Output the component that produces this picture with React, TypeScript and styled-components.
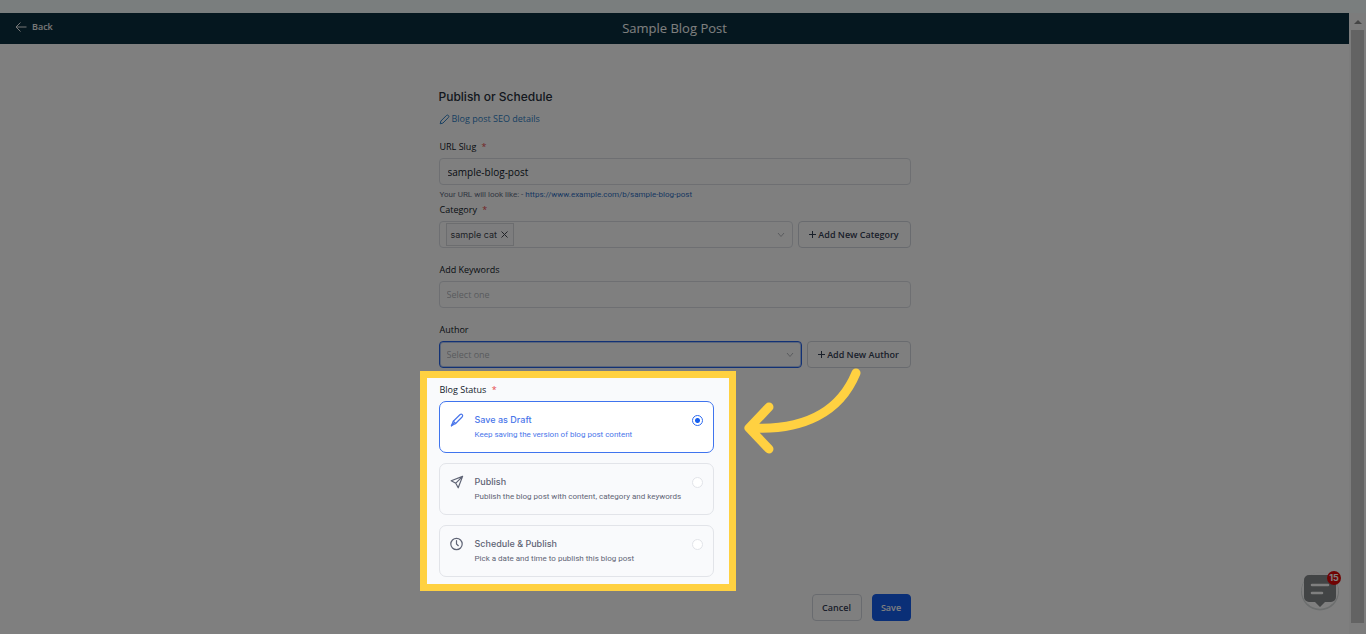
import React, { useState } from 'react';
import styled, { createGlobalStyle, css } from 'styled-components';

const sans = "'Open Sans', 'Noto Sans', sans-serif";
const inter = "Inter, 'Liberation Sans', sans-serif";
const small = "Roboto, 'Open Sans', sans-serif";

const GlobalStyle = createGlobalStyle`
  * { box-sizing: border-box; }
  body { margin: 0; background: #ffffff; font-family: ${sans}; }
  button, input, select { font-family: inherit; margin: 0; }
`;

const Page = styled.div`
  position: relative;
  overflow: hidden;
  min-height: 100vh;
  display: flex;
  flex-direction: column;
`;

const TopStrip = styled.div`
  height: 13px;
  background: #f4fcfc;
`;

const Body = styled.div`
  flex: 1;
  display: flex;
`;

const Content = styled.div`
  flex: 1;
  min-width: 0;
`;

const Header = styled.header`
  display: grid;
  grid-template-columns: 1fr auto 1fr;
  align-items: center;
  height: 31px;
  padding: 0 15px;
  background: #0b2f3e;
  color: #ffffff;
`;

const BackLink = styled.a`
  display: flex;
  align-items: center;
  gap: 5px;
  padding-bottom: 4px;
  color: #f0f0f0;
  font-size: 9px;
  font-weight: 600;
  line-height: 12px;
  text-decoration: none;
`;

const PageTitle = styled.h1`
  margin: 0;
  padding-bottom: 2px;
  font-size: 13px;
  font-weight: 400;
  line-height: 16px;
`;

const Form = styled.form`
  display: flex;
  flex-direction: column;
  width: 100%;
  max-width: 472px;
  margin: 0 auto;
  padding: 45px 0 12px;
`;

const FormTitle = styled.h2`
  margin: 0 0 7px;
  font-family: ${inter};
  font-size: 12px;
  font-weight: 500;
  line-height: 16px;
  color: #28303c;
`;

const SeoLink = styled.a`
  display: flex;
  align-items: center;
  gap: 2px;
  margin-bottom: 14px;
  font-size: 9px;
  line-height: 14px;
  color: #2f7fc4;
  text-decoration: none;
`;

const Field = styled.div<{ $gap?: number }>`
  display: flex;
  flex-direction: column;
  margin-bottom: ${(p) => p.$gap ?? 15}px;
`;

const labelText = css`
  margin: 0 0 4px;
  padding: 0 1px;
  font-size: 9px;
  font-weight: 400;
  line-height: 14px;
  color: #101828;
`;

const Label = styled.label`
  ${labelText}
`;

const Required = styled.span`
  margin-left: 3px;
  color: #e5484d;
`;

const box = css`
  height: 27px;
  border: 1px solid #dcdfe5;
  border-radius: 4px;
  background: #ffffff;
`;

const TextInput = styled.input<{ $roomy?: boolean }>`
  ${box}
  width: 100%;
  padding: 0 ${(p) => (p.$roomy ? 8 : 7)}px;
  font-size: ${(p) => (p.$roomy ? 10 : 9)}px;
  color: #101828;
  outline: none;
  &::placeholder { color: #b4b7bd; opacity: 1; }
`;

const Hint = styled.p`
  margin: 4px 0 0;
  padding: 0 1px;
  font-family: ${small};
  font-size: 8px;
  line-height: 12px;
  color: #667085;
  a { color: #2f6fc4; text-decoration: none; }
`;

const Row = styled.div`
  display: flex;
  gap: 5px;
`;

const TagBox = styled.div`
  ${box}
  flex: 1;
  min-width: 0;
  display: flex;
  align-items: center;
  padding: 0 7px 0 6px;
`;

const Tag = styled.span`
  display: flex;
  align-items: center;
  gap: 4px;
  height: 23px;
  padding: 0 5px 0 4px;
  border: 1px solid #d9dade;
  background: #fafafc;
  font-family: ${inter};
  font-size: 9px;
  color: #40454f;
`;

const TagRemove = styled.button`
  display: flex;
  padding: 0;
  border: 0;
  background: none;
  color: #40454f;
`;

const TagInput = styled.input`
  flex: 1;
  min-width: 0;
  border: 0;
  outline: none;
  background: none;
  font-size: 9px;
`;

const SelectWrap = styled.div`
  flex: 1;
  min-width: 0;
  display: grid;
  align-items: center;
  > * { grid-area: 1 / 1; }
  > svg { justify-self: end; margin-right: 8px; pointer-events: none; }
`;

const Select = styled.select`
  ${box}
  width: 100%;
  appearance: none;
  border-color: #2563eb;
  box-shadow: inset 0 0 0 1px #b4caf5;
  padding: 0 7px;
  font-size: 9px;
  color: #b4b7bd;
  outline: none;
`;

const Button = styled.button<{ $primary?: boolean }>`
  height: 27px;
  min-width: ${(p) => (p.$primary ? 39 : 50)}px;
  padding: 0 8px;
  border: 1px solid ${(p) => (p.$primary ? '#155eef' : '#d2d6de')};
  border-radius: 4px;
  background: ${(p) => (p.$primary ? '#155eef' : '#ffffff')};
  color: ${(p) => (p.$primary ? '#ffffff' : '#344054')};
  font-size: 9px;
  font-weight: 600;
  white-space: nowrap;
`;

const AddButton = styled(Button)<{ $width: number }>`
  display: flex;
  align-items: center;
  justify-content: center;
  gap: 2px;
  min-width: ${(p) => p.$width}px;
`;

/* The section the tour points at: its spread shadow dims everything else. */
const Spotlight = styled.fieldset`
  position: relative;
  z-index: 2;
  width: 316px;
  margin: -12px 0 3px -19px;
  padding: 5px 15px 7px 12px;
  border: 7px solid #ffd141;
  background: #f9fafc;
  box-shadow: 0 0 0 2000px rgba(0, 0, 0, 0.5);
`;

const Legend = styled.div`
  ${labelText}
`;

const Options = styled.div`
  display: flex;
  flex-direction: column;
  gap: 10px;
`;

const Option = styled.label<{ $selected: boolean }>`
  display: flex;
  align-items: flex-start;
  height: 52px;
  padding: 10px;
  border: 1px solid ${(p) => (p.$selected ? '#3f74ee' : '#e2e4e9')};
  border-radius: 7px;
  background: ${(p) => (p.$selected ? '#ffffff' : '#f9fafc')};
  color: ${(p) => (p.$selected ? '#4a76ea' : '#5f6475')};
  > svg { margin-top: 1px; flex: none; }
`;

const OptionText = styled.span`
  flex: 1;
  min-width: 0;
  display: flex;
  flex-direction: column;
  margin-left: 11px;
`;

const OptionTitle = styled.span`
  font-family: ${inter};
  font-size: 9px;
  font-weight: 500;
  line-height: 16px;
`;

const OptionNote = styled.span`
  font-family: ${small};
  font-size: 8px;
  line-height: 14px;
  white-space: nowrap;
`;

const Radio = styled.input`
  appearance: none;
  flex: none;
  width: 11px;
  height: 11px;
  margin: 3px 0 0;
  border: 1px solid #e2e4e9;
  border-radius: 50%;
  background: #ffffff;
  &:checked {
    border-color: #2f6bf0;
    background: radial-gradient(circle, #155eef 0 2px, #ffffff 3px);
  }
`;

const Arrow = styled.svg`
  position: absolute;
  left: 316px;
  top: -10px;
  overflow: visible;
`;

const Actions = styled.div`
  display: flex;
  justify-content: flex-end;
  gap: 10px;
`;

const ScrollTrack = styled.div`
  width: 17px;
  display: flex;
  flex-direction: column;
  align-items: center;
  padding: 7px 0 11px;
  background: #f9f9f9;
`;

const ScrollThumb = styled.div`
  flex: 1;
  width: 13px;
  margin-top: 6px;
  background: #c6c6c6;
`;

const Chat = styled.button`
  position: absolute;
  right: 26px;
  bottom: 23px;
  width: 40px;
  height: 40px;
  padding: 0;
  border: 0;
  background: none;
`;

const ChatBadge = styled.span`
  position: absolute;
  right: -1px;
  top: 0;
  width: 14px;
  height: 14px;
  border-radius: 50%;
  background: #e00606;
  color: #ffffff;
  font-family: ${inter};
  font-size: 9px;
  font-weight: 700;
  line-height: 14px;
  text-align: center;
`;

const Chevron = () => (
  <svg width="8" height="6" viewBox="0 0 8 6" fill="none" stroke="#b4b7bd" aria-hidden="true">
    <path d="M1 1l3 3.5L7 1" />
  </svg>
);

const Plus = () => (
  <svg width="7" height="7" viewBox="0 0 7 7" fill="none" stroke="currentColor" aria-hidden="true">
    <path d="M3.5 0v7M0 3.5h7" />
  </svg>
);

const PenIcon = () => (
  <svg width="11" height="11" viewBox="0 0 11 11" fill="none" stroke="currentColor" strokeLinejoin="round" aria-hidden="true">
    <path d="M1.200 9.800l.7-2.800L7.400 1.500a1.300 1.300 0 0 1 2 2L3.900 9.100z" />
  </svg>
);

const BrushIcon = () => (
  <svg width="14" height="14" viewBox="0 0 14 14" fill="none" stroke="currentColor" strokeWidth="1.200" strokeLinejoin="round" strokeLinecap="round" aria-hidden="true">
    <path d="M3.300 8.200L9.900 1.700q1.300-1 2.300-.1.900 1-.1 2.400L5.600 10.500l-4.200 2.300z" />
    <path d="M3.300 8.200l2.300 2.300M1.400 12.800l2.400-2.600" />
  </svg>
);

const SendIcon = () => (
  <svg width="14" height="14" viewBox="0 0 14 14" fill="none" stroke="currentColor" strokeWidth="1.200" strokeLinejoin="round" strokeLinecap="round" aria-hidden="true">
    <path d="M12.600 1.400L1.200 5.800l4.600 2.400 2.400 4.600zM5.800 8.200l6.800-6.800" />
  </svg>
);

const ClockIcon = () => (
  <svg width="14" height="14" viewBox="0 0 14 14" fill="none" stroke="currentColor" strokeWidth="1.200" strokeLinecap="round" aria-hidden="true">
    <circle cx="6.500" cy="7" r="5.700" />
    <path d="M6.500 3.600V7l1.800 1.700" />
  </svg>
);

const statuses = [
  { id: 'draft', title: 'Save as Draft', note: 'Keep saving the version of blog post content', Icon: BrushIcon },
  { id: 'publish', title: 'Publish', note: 'Publish the blog post with content, category and keywords', Icon: SendIcon },
  { id: 'schedule', title: 'Schedule & Publish', note: 'Pick a date and time to publish this blog post', Icon: ClockIcon },
];

export default function App() {
  const [status, setStatus] = useState('draft');
  const [slug, setSlug] = useState('sample-blog-post');

  return (
    <Page>
      <GlobalStyle />
      <TopStrip />
      <Body>
        <Content>
          <Header>
            <BackLink href="#back">
              <svg width="12" height="10" viewBox="0 0 12 10" fill="none" stroke="currentColor" aria-hidden="true">
                <path d="M11.500 5H1M5.500.5L1 5l4.500 4.500" />
              </svg>
              Back
            </BackLink>
            <PageTitle>Sample Blog Post</PageTitle>
          </Header>
          <Form onSubmit={(e) => e.preventDefault()}>
            <FormTitle>Publish or Schedule</FormTitle>
            <SeoLink href="#seo">
              <PenIcon />
              Blog post SEO details
            </SeoLink>

            <Field $gap={2}>
              <Label htmlFor="slug">URL Slug <Required>*</Required></Label>
              <TextInput id="slug" $roomy value={slug} onChange={(e) => setSlug(e.target.value)} />
              <Hint>
                Your URL will look like: - <a href="#url">https://www.example.com/b/sample-blog-post</a>
              </Hint>
            </Field>

            <Field>
              <Label htmlFor="category">Category <Required>*</Required></Label>
              <Row>
                <TagBox>
                  <Tag>
                    sample cat
                    <TagRemove type="button" aria-label="Remove sample cat">
                      <svg width="7" height="7" viewBox="0 0 7 7" stroke="currentColor" aria-hidden="true">
                        <path d="M.5.5l6 6M6.500.5l-6 6" />
                      </svg>
                    </TagRemove>
                  </Tag>
                  <TagInput id="category" />
                  <Chevron />
                </TagBox>
                <AddButton type="button" $width={113}><Plus />Add New Category</AddButton>
              </Row>
            </Field>

            <Field>
              <Label htmlFor="keywords">Add Keywords</Label>
              <TextInput id="keywords" placeholder="Select one" />
            </Field>

            <Field>
              <Label htmlFor="author">Author</Label>
              <Row>
                <SelectWrap>
                  <Select id="author">
                    <option>Select one</option>
                  </Select>
                  <Chevron />
                </SelectWrap>
                <AddButton type="button" $width={104}><Plus />Add New Author</AddButton>
              </Row>
            </Field>

            <Spotlight aria-labelledby="status-label">
              <Legend id="status-label">Blog Status <Required>*</Required></Legend>
              <Options>
                {statuses.map(({ id, title, note, Icon }) => (
                  <Option key={id} $selected={status === id}>
                    <Icon />
                    <OptionText>
                      <OptionTitle>{title}</OptionTitle>
                      <OptionNote>{note}</OptionNote>
                    </OptionText>
                    <Radio type="radio" name="status" checked={status === id} onChange={() => setStatus(id)} />
                  </Option>
                ))}
              </Options>
              <Arrow width="120" height="88" viewBox="0 0 120 88" fill="none" stroke="#ffd141" strokeWidth="9" strokeLinecap="round" strokeLinejoin="round" aria-hidden="true">
                <path d="M113 5C97 44 61 63 6 60M26 39L6 60l20 21" />
              </Arrow>
            </Spotlight>

            <Actions>
              <Button type="button">Cancel</Button>
              <Button type="submit" $primary>Save</Button>
            </Actions>
          </Form>
        </Content>
        <ScrollTrack aria-hidden="true">
          <svg width="8" height="4" viewBox="0 0 8 4"><path d="M4 0l4 4H0z" fill="#8c8c8c" /></svg>
          <ScrollThumb />
        </ScrollTrack>
      </Body>
      <Chat type="button" aria-label="Open chat, 15 unread">
        <svg width="40" height="40" viewBox="0 0 40 40" aria-hidden="true">
          <circle cx="20" cy="20.500" r="19" fill="#d8dcdc" />
          <circle cx="20" cy="19.500" r="18.200" fill="#ffffff" />
          <path d="M9 4h22a5 5 0 0 1 5 5v17a5 5 0 0 1-5 5h-6l-5 5-5-5H9a5 5 0 0 1-5-5V9a5 5 0 0 1 5-5z" fill="#85888a" />
          <path d="M12 14h16M12 22h10" stroke="#ffffff" strokeWidth="2.600" strokeLinecap="round" />
        </svg>
        <ChatBadge>15</ChatBadge>
      </Chat>
    </Page>
  );
}
